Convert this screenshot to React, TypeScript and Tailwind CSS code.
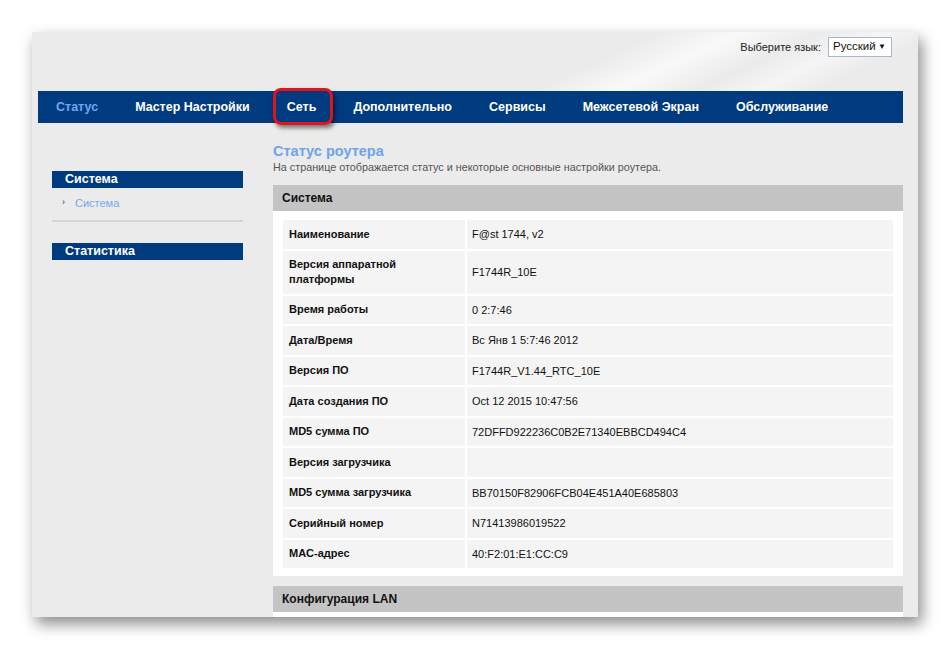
import React from 'react';

const navItems = ['Статус', 'Мастер Настройки', 'Сеть', 'Дополнительно', 'Сервисы', 'Межсетевой Экран', 'Обслуживание'];

const rows: { label: string; value: string; tall?: boolean }[] = [
    { label: 'Наименование', value: 'F@st 1744, v2' },
    { label: 'Версия аппаратной платформы', value: 'F1744R_10E', tall: true },
    { label: 'Время работы', value: '0 2:7:46' },
    { label: 'Дата/Время', value: 'Вс Янв 1 5:7:46 2012' },
    { label: 'Версия ПО', value: 'F1744R_V1.44_RTC_10E' },
    { label: 'Дата создания ПО', value: 'Oct 12 2015 10:47:56' },
    { label: 'MD5 сумма ПО', value: '72DFFD922236C0B2E71340EBBCD494C4' },
    { label: 'Версия загрузчика', value: '' },
    { label: 'MD5 сумма загрузчика', value: 'BB70150F82906FCB04E451A40E685803' },
    { label: 'Серийный номер', value: 'N71413986019522' },
    { label: 'MAC-адрес', value: '40:F2:01:E1:CC:C9' },
];

const App: React.FC = () => {
    return (
        <div className="w-[950px] h-[650px] bg-white pt-[32px] pl-[32px] font-['Liberation_Sans',Arial,sans-serif] overflow-hidden">
            <div className="w-[886px] h-[585px] bg-[#ebebeb] shadow-[4px_7px_14px_rgba(0,0,0,0.45)] overflow-hidden flex flex-col">
                {/* Header */}
                <div className="shrink-0 h-[59px] flex justify-end items-start pt-[5px] pr-[26px] bg-[linear-gradient(155deg,transparent_62%,rgba(255,255,255,0.7)_70%,transparent_78%,rgba(255,255,255,0.5)_84%,transparent_90%)]">
                    <div className="flex items-center gap-[7px] text-[11px] text-[#222]">
                        <span>Выберите язык:</span>
                        <div className="h-[20px] w-[64px] bg-white border border-[#a9b8c8] flex items-center justify-between pl-[4px] pr-[5px] text-[11.5px] text-[#111]">
                            <span>Русский</span>
                            <span className="text-[8px]">▼</span>
                        </div>
                    </div>
                </div>

                {/* Nav */}
                <div className="shrink-0 ml-[6px] w-[865px] h-[32px] bg-[#003a7f] flex items-center pl-[18px] gap-[37px] text-[12.5px] font-bold text-white">
                    {navItems.map((item, i) => (
                        <div key={item} className={`relative ${i === 0 ? 'text-[#6fa6f0]' : ''}`}>
                            {item}
                            {item === 'Сеть' && (
                                <div className="absolute left-[-14px] right-[-17px] top-[-10px] bottom-[-9px] border-[3px] border-[#e0141b] rounded-[8px] shadow-[2px_3px_4px_rgba(0,0,0,0.5)]" />
                            )}
                        </div>
                    ))}
                </div>

                {/* Body */}
                <div className="flex flex-1">
                    {/* Sidebar */}
                    <div className="ml-[20px] w-[191px] pt-[48px] shrink-0">
                        <div className="h-[17px] bg-[#003a7f] text-white font-bold text-[12.5px] leading-[17px] pl-[13px]">Система</div>
                        <div className="flex items-center h-[30px] pl-[10px] text-[11px]">
                            <span className="text-[#333] text-[9px] mr-[10px]">›</span>
                            <span className="text-[#78a8ee]">Система</span>
                        </div>
                        <div className="h-[2px] bg-[#d6d6d6] mt-[2px]" />
                        <div className="h-[17px] bg-[#003a7f] text-white font-bold text-[12.5px] leading-[17px] pl-[13px] mt-[21px]">Статистика</div>
                    </div>

                    {/* Content */}
                    <div className="ml-[30px] w-[630px] pt-[19px] flex flex-col">
                        <div className="text-[14.5px] font-bold text-[#6fa3ea] leading-[18px]">Статус роутера</div>
                        <div className="text-[10.8px] text-[#555] leading-[14px]">На странице отображается статус и некоторые основные настройки роутера.</div>

                        <div className="mt-[11px] h-[26px] bg-[#c4c4c4] text-[12px] font-bold text-[#111] leading-[26px] pl-[9px]">Система</div>
                        <div className="bg-white px-[10px] pt-[9px] pb-[8px] flex flex-col gap-[2px]">
                            {rows.map((r) => (
                                <div key={r.label} className={`flex gap-[2px] text-[11px] text-[#111] ${r.tall ? 'h-[43px]' : 'h-[28.5px]'}`}>
                                    <div className="w-[182px] bg-[#f4f4f4] flex items-center pl-[6px] pr-[50px] font-bold leading-[15px]">{r.label}</div>
                                    <div className="flex-1 bg-[#f4f4f4] flex items-center pl-[5px]">{r.value}</div>
                                </div>
                            ))}
                        </div>

                        <div className="mt-[10px] h-[26px] bg-[#c4c4c4] text-[12px] font-bold text-[#111] leading-[26px] pl-[9px]">Конфигурация LAN</div>
                        <div className="bg-white h-[20px]" />
                    </div>
                </div>
            </div>
        </div>
    );
};

export default App;
